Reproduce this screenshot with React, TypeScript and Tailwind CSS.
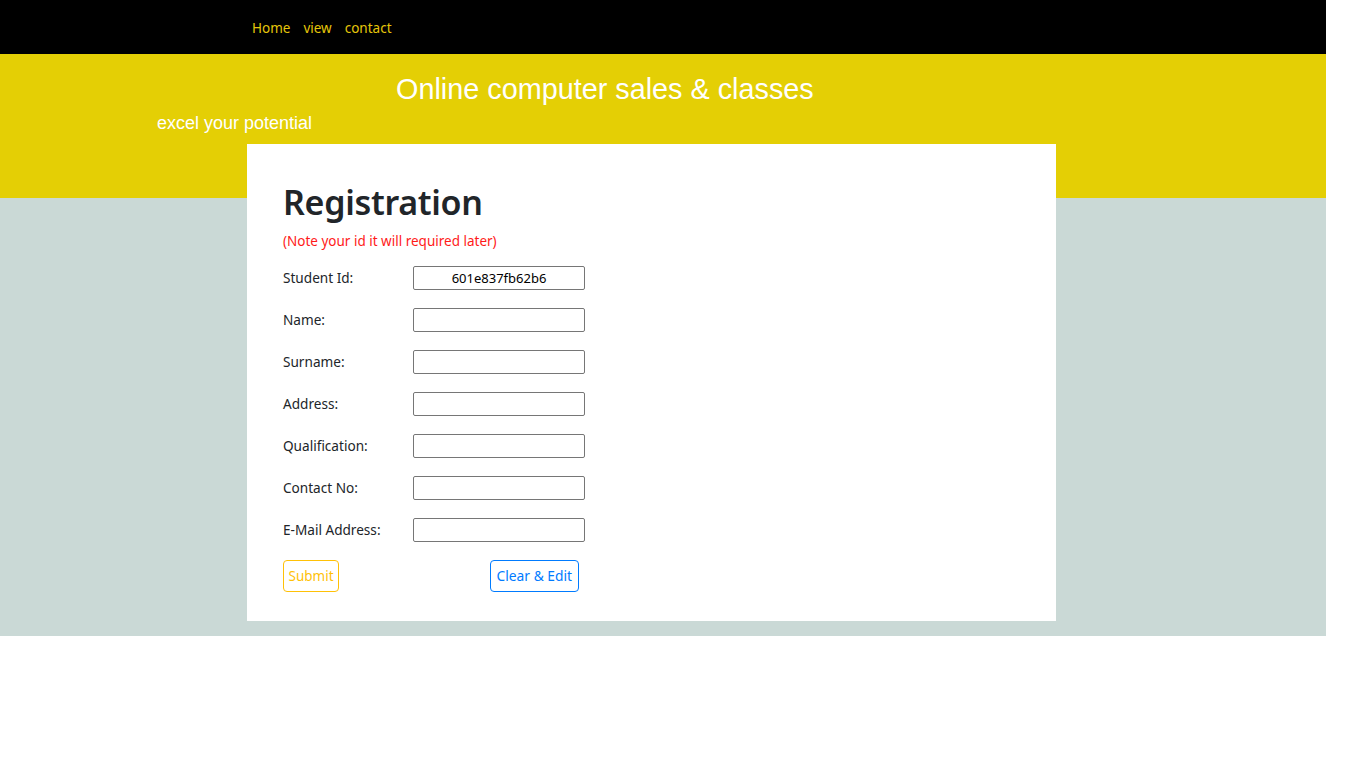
import React from "react";

const fields = [
  { label: "Student Id:", value: "601e837fb62b6" },
  { label: "Name:", value: "" },
  { label: "Surname:", value: "" },
  { label: "Address:", value: "" },
  { label: "Qualification:", value: "" },
  { label: "Contact No:", value: "" },
  { label: "E-Mail Address:", value: "" },
];

const sans = "font-['Noto_Sans','Open_Sans',sans-serif]";

export default function App() {
  return (
    <div className={`w-[1326px] ${sans}`}>
      {/* top nav */}
      <nav className="flex h-[54px] items-center gap-[13px] bg-black pl-[252px] pt-[2px] text-[13.5px] text-[#e5c60a]">
        <a href="#">Home</a>
        <a href="#">view</a>
        <a href="#">contact</a>
      </nav>

      {/* banner */}
      <header className="h-[144px] bg-[#e4cf05] pt-[19px] font-['Liberation_Sans',Arial,sans-serif] text-white">
        <h1 className="ml-[396px] text-[28.8px] leading-[32px]">Online computer sales &amp; classes</h1>
        <p className="ml-[157px] mt-[8px] text-[18px] leading-[21px]">excel your potential</p>
      </header>

      {/* form area */}
      <main className="flow-root bg-[#cad9d6] pb-[15px]">
        <div className="ml-[247px] mt-[-54px] w-[809px] h-[477px] bg-white px-[36px] pt-[37px]">
          <h2 className="text-[34px] font-semibold leading-[43px] tracking-[-0.3px] text-[#212529]">Registration</h2>
          <p className="mt-[8px] text-[13.5px] leading-[18px] text-[#ff1a1a]">(Note your id it will required later)</p>

          <form className="mt-[16px] flex flex-col gap-[18px]">
            {fields.map((f) => (
              <div key={f.label} className="flex items-center text-[13.6px] text-[#212529]">
                <label className="w-[130px]">{f.label}</label>
                <input
                  type="text"
                  defaultValue={f.value}
                  className="h-[24px] w-[172px] rounded-[2px] border border-[#767676] bg-white px-[2px] text-center text-[13px] text-black outline-none"
                />
              </div>
            ))}

            <div className="flex items-center">
              <button
                type="button"
                className="h-[32px] rounded-[4px] border border-[#ffc107] px-[4.5px] text-[13.5px] text-[#ffc107]"
              >
                Submit
              </button>
              <button
                type="button"
                className="ml-[151px] h-[32px] rounded-[4px] border border-[#007bff] px-[5.5px] text-[13.8px] text-[#007bff]"
              >
                Clear &amp; Edit
              </button>
            </div>
          </form>
        </div>
      </main>
    </div>
  );
}
